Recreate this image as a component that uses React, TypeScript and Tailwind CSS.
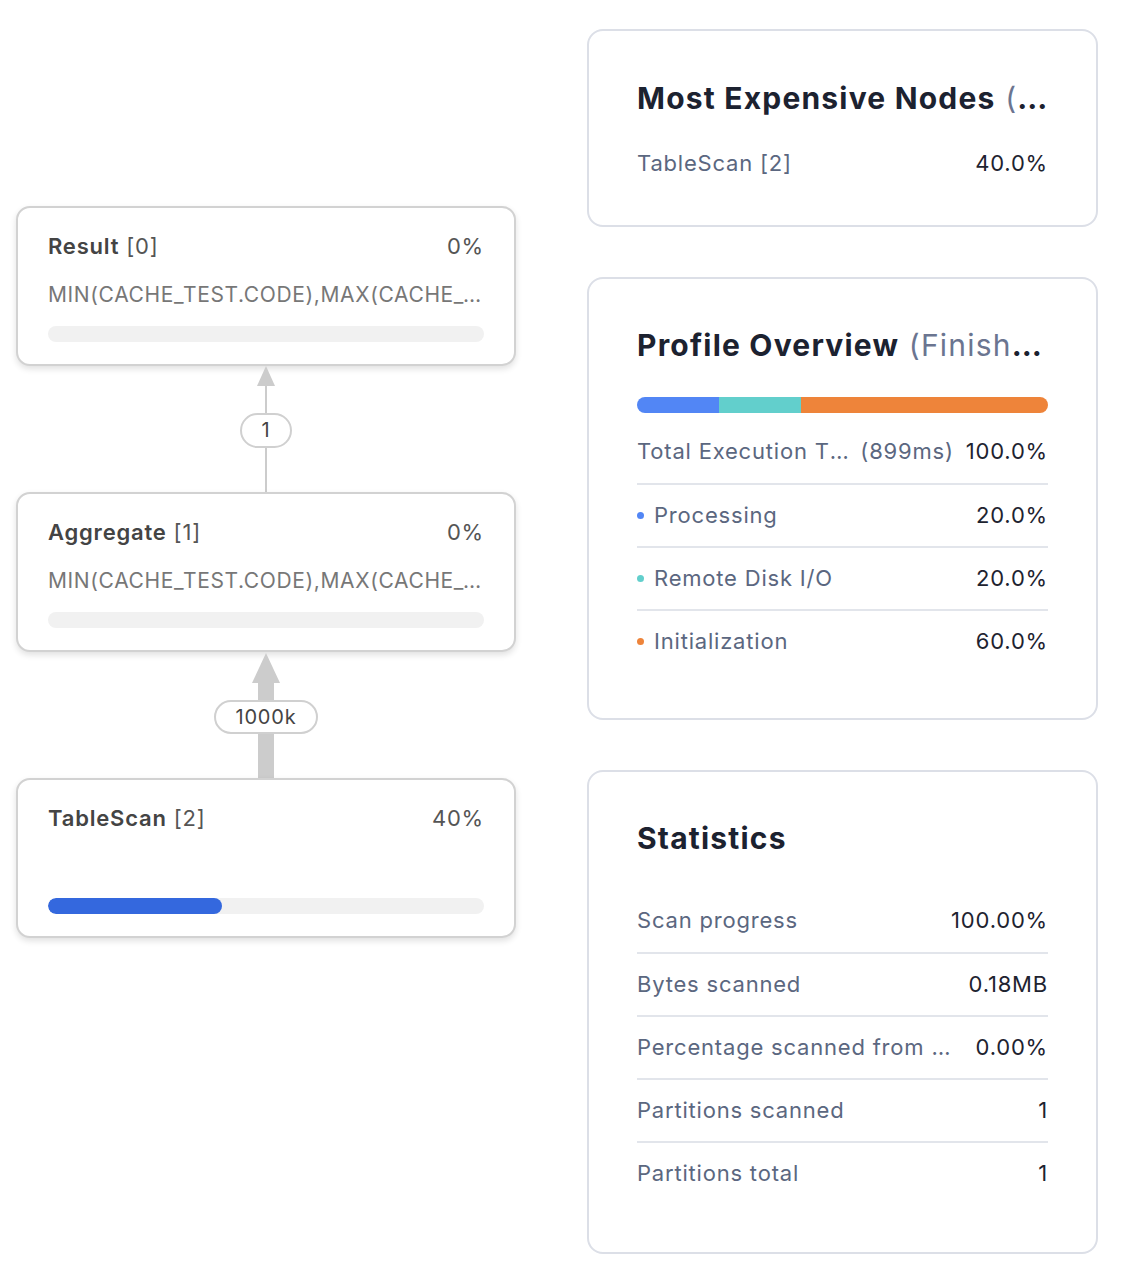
import React from 'react';

type NodeProps = { name: string; id: number; pct: number; detail?: string };

const PlanNode: React.FC<NodeProps> = ({ name, id, pct, detail }) => (
  <div className="flex h-[160px] w-[500px] flex-col rounded-[14px] border-2 border-[#d2d2d2] bg-white px-[30px] pt-[24px] pb-[22px] shadow-[0_3px_6px_rgba(0,0,0,0.12)]">
    <div className="flex h-[28px] items-center justify-between text-[22px] text-[#555]">
      <div>
        <span className="font-semibold text-[#444]">{name}</span> [{id}]
      </div>
      <span>{pct}%</span>
    </div>
    {detail && (
      <div className="mt-[21px] h-[28px] truncate text-[21px] leading-[28px] tracking-[0.03em] text-[#777]">
        {detail}
      </div>
    )}
    <div className="mt-auto h-[16px] w-full overflow-hidden rounded-full bg-[#f1f1f1]">
      <div className="h-full rounded-full bg-[#3468de]" style={{ width: `${pct}%` }} />
    </div>
  </div>
);

const Edge: React.FC<{ label: string; thick?: boolean }> = ({ label, thick }) => (
  <div className="flex h-[126px] w-[500px] flex-col items-center">
    {thick ? (
      <>
        <svg width="28" height="30" viewBox="0 0 28 30" className="mt-[1px] block">
          <polygon points="14,0 28,30 0,30" fill="#cccccc" />
        </svg>
        <div className="h-[17px] w-[16px] bg-[#cccccc]" />
        <div className="rounded-full border-2 border-[#d0d0d0] bg-white px-[20px] text-[20px] leading-[30px] text-[#444]">
          {label}
        </div>
        <div className="w-[16px] flex-1 bg-[#cccccc]" />
      </>
    ) : (
      <>
        <svg width="18" height="20" viewBox="0 0 18 20" className="block">
          <polygon points="9,0 18,20 0,20" fill="#cccccc" />
        </svg>
        <div className="h-[27px] w-[2px] bg-[#cccccc]" />
        <div className="rounded-full border-2 border-[#d0d0d0] bg-white px-[20px] text-[20px] leading-[31px] text-[#444]">
          {label}
        </div>
        <div className="w-[2px] flex-1 bg-[#cccccc]" />
      </>
    )}
  </div>
);

const Row: React.FC<{ label: React.ReactNode; value: string; first?: boolean; dot?: string; gap?: string }> = ({
  label,
  value,
  first,
  dot,
  gap = 'gap-5',
}) => (
  <div
    className={`flex h-[63px] items-center justify-between ${gap} text-[22px] ${
      first ? '' : 'border-t-2 border-[#e2e5eb]'
    }`}
  >
    <div className="flex min-w-0 items-center text-[#5b6780]">
      {dot && <span className={`mr-[10px] h-[7px] w-[7px] shrink-0 rounded-full ${dot}`} />}
      {label}
    </div>
    <span className="shrink-0 text-[#1e2330]">{value}</span>
  </div>
);

const Card: React.FC<{ children: React.ReactNode; className?: string }> = ({ children, className }) => (
  <div className={`w-[511px] rounded-[16px] border-2 border-[#dcdfe7] bg-white px-[48px] ${className ?? ''}`}>
    {children}
  </div>
);

const Title: React.FC<{ main: string; sub?: string }> = ({ main, sub }) => (
  <h2 className="truncate text-[30px] font-bold leading-[36px] tracking-[0.04em] text-[#1c2230]">
    {main}
    {sub && <span className="font-normal text-[#6b7590]"> {sub}</span>}
  </h2>
);

export default function App() {
  return (
    <div
      className="flex min-h-screen items-start gap-[71px] bg-white pt-[29px] pl-[16px] tracking-[0.05em]"
      style={{ fontFamily: 'Inter, "Noto Sans", sans-serif' }}
    >
      {/* plan graph */}
      <div className="mt-[177px] flex flex-col">
        <PlanNode name="Result" id={0} pct={0} detail="MIN(CACHE_TEST.CODE),MAX(CACHE_TEST.CODE)" />
        <Edge label="1" />
        <PlanNode name="Aggregate" id={1} pct={0} detail="MIN(CACHE_TEST.CODE),MAX(CACHE_TEST.CODE)" />
        <Edge label="1000k" thick />
        <PlanNode name="TableScan" id={2} pct={40} />
      </div>

      {/* side panels */}
      <div className="flex flex-col">
        <Card className="pt-[49px] pb-[30px]">
          <Title main="Most Expensive Nodes" sub="(Top 1)" />
          <div className="mt-[16px]">
            <Row first label="TableScan [2]" value="40.0%" />
          </div>
        </Card>

        <Card className="mt-[50px] pt-[48px] pb-[46px]">
          <Title main="Profile Overview" sub="(Finished)" />
          <div className="mt-[34px] flex h-[16px] overflow-hidden rounded-full">
            <div className="w-[20%] bg-[#5286f5]" />
            <div className="w-[20%] bg-[#62cfcc]" />
            <div className="w-[60%] bg-[#ee843a]" />
          </div>
          <div className="mt-[7px]">
            <Row
              first
              gap="gap-3"
              label={
                <>
                  <span className="truncate">Total Execution Time</span>
                  <span className="ml-[6px] shrink-0">(899ms)</span>
                </>
              }
              value="100.0%"
            />
            <Row dot="bg-[#5286f5]" label="Processing" value="20.0%" />
            <Row dot="bg-[#62cfcc]" label="Remote Disk I/O" value="20.0%" />
            <Row dot="bg-[#ee843a]" label="Initialization" value="60.0%" />
          </div>
        </Card>

        <Card className="mt-[50px] pt-[48px] pb-[48px]">
          <Title main="Statistics" />
          <div className="mt-[33px]">
            <Row first label="Scan progress" value="100.00%" />
            <Row label="Bytes scanned" value="0.18MB" />
            <Row label={<span className="truncate">Percentage scanned from cache</span>} value="0.00%" />
            <Row label="Partitions scanned" value="1" />
            <Row label="Partitions total" value="1" />
          </div>
        </Card>
      </div>
    </div>
  );
}
